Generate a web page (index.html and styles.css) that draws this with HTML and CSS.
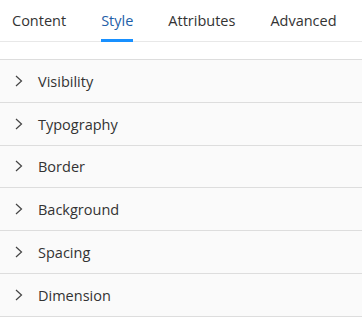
FILE: index.html
```html
<!DOCTYPE html>
<html lang="en">
<head>
    <meta charset="UTF-8">
    <meta name="viewport" content="width=device-width, initial-scale=1.0">
    <title>Style Panel</title>
    <link rel="stylesheet" href="styles.css">
</head>
<body>
    <div class="panel">
        <div class="tabs">
            <div class="tab">Content</div>
            <div class="tab active">Style</div>
            <div class="tab">Attributes</div>
            <div class="tab">Advanced</div>
        </div>

        <div class="sections">
            <div class="section">
                <svg class="chevron" width="8" height="12" viewBox="0 0 8 12"><path d="M1 1 L6.5 6 L1 11" fill="none" stroke="#444" stroke-width="1.2"/></svg>
                <span>Visibility</span>
            </div>
            <div class="section">
                <svg class="chevron" width="8" height="12" viewBox="0 0 8 12"><path d="M1 1 L6.5 6 L1 11" fill="none" stroke="#444" stroke-width="1.2"/></svg>
                <span>Typography</span>
            </div>
            <div class="section">
                <svg class="chevron" width="8" height="12" viewBox="0 0 8 12"><path d="M1 1 L6.5 6 L1 11" fill="none" stroke="#444" stroke-width="1.2"/></svg>
                <span>Border</span>
            </div>
            <div class="section">
                <svg class="chevron" width="8" height="12" viewBox="0 0 8 12"><path d="M1 1 L6.5 6 L1 11" fill="none" stroke="#444" stroke-width="1.2"/></svg>
                <span>Background</span>
            </div>
            <div class="section">
                <svg class="chevron" width="8" height="12" viewBox="0 0 8 12"><path d="M1 1 L6.5 6 L1 11" fill="none" stroke="#444" stroke-width="1.2"/></svg>
                <span>Spacing</span>
            </div>
            <div class="section">
                <svg class="chevron" width="8" height="12" viewBox="0 0 8 12"><path d="M1 1 L6.5 6 L1 11" fill="none" stroke="#444" stroke-width="1.2"/></svg>
                <span>Dimension</span>
            </div>
        </div>
    </div>
</body>
</html>
```

FILE: styles.css
```css
body {
    font-family: "Open Sans", "Noto Sans", Arial, sans-serif;
    margin: 0;
    padding: 0;
    background-color: #fff;
    color: #333;
}
.panel {
    width: 362px;
}
.tabs {
    display: flex;
    gap: 35px;
    padding-left: 12px;
    height: 41px;
    border-bottom: 1px solid #e8e8e8;
}
.tab {
    font-size: 14.5px;
    line-height: 40px;
    padding-top: 1px;
    color: #333;
    position: relative;
}
.tab.active {
    color: #1f5fa8;
}
.tab.active::after {
    content: "";
    position: absolute;
    left: 0;
    right: 0;
    bottom: -1px;
    height: 3px;
    background: #1890ff;
}
.sections {
    margin-top: 17px;
    background: #fafafa;
    border-top: 1px solid #ddd;
}
.section {
    display: flex;
    align-items: center;
    height: 41.8px;
    padding-left: 15px;
    border-bottom: 1px solid #ddd;
    font-size: 14.5px;
    color: #333;
}
.section span {
    padding-top: 1px;
}
.section .chevron {
    margin-right: 15px;
}
```
